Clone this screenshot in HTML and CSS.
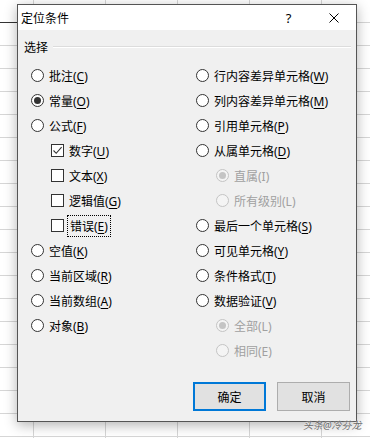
FILE: index.html
```html
<!DOCTYPE html>
<html lang="zh-CN">
<head>
    <meta charset="UTF-8">
    <title>定位条件</title>
    <link rel="stylesheet" href="styles.css">
</head>
<body>

<div class="sheet-mark"></div>

<div class="dialog">
    <div class="titlebar">
        <span class="title">定位条件</span>
        <span class="cap-btn">?</span>
        <span class="cap-btn">
            <svg width="10" height="10" viewBox="0 0 10 10"><path d="M0.5 0.5L9.5 9.5M9.5 0.5L0.5 9.5" stroke="#000" stroke-width="1" fill="none"/></svg>
        </span>
    </div>

    <div class="content">
        <div class="group-head">
            <span>选择</span>
            <i class="rule"></i>
        </div>

        <div class="options">
            <!-- left column -->
            <div class="col">
                <div class="opt"><span class="radio"></span><span>批注(<u>C</u>)</span></div>
                <div class="opt"><span class="radio checked"></span><span>常量(<u>O</u>)</span></div>
                <div class="opt"><span class="radio"></span><span>公式(<u>F</u>)</span></div>
                <div class="opt sub"><span class="check">
                    <svg width="11" height="11" viewBox="0 0 11 11"><path d="M1.5 5.5L4.2 8.3L9.6 2.2" stroke="#333" stroke-width="1.1" fill="none"/></svg>
                </span><span>数字(<u>U</u>)</span></div>
                <div class="opt sub"><span class="check"></span><span>文本(<u>X</u>)</span></div>
                <div class="opt sub"><span class="check"></span><span>逻辑值(<u>G</u>)</span></div>
                <div class="opt sub"><span class="check"></span><span class="focus">错误(<u>E</u>)</span></div>
                <div class="opt"><span class="radio"></span><span>空值(<u>K</u>)</span></div>
                <div class="opt"><span class="radio"></span><span>当前区域(<u>R</u>)</span></div>
                <div class="opt"><span class="radio"></span><span>当前数组(<u>A</u>)</span></div>
                <div class="opt"><span class="radio"></span><span>对象(<u>B</u>)</span></div>
            </div>

            <!-- right column -->
            <div class="col">
                <div class="opt"><span class="radio"></span><span>行内容差异单元格(<u>W</u>)</span></div>
                <div class="opt"><span class="radio"></span><span>列内容差异单元格(<u>M</u>)</span></div>
                <div class="opt"><span class="radio"></span><span>引用单元格(<u>P</u>)</span></div>
                <div class="opt"><span class="radio"></span><span>从属单元格(<u>D</u>)</span></div>
                <div class="opt sub disabled"><span class="radio checked"></span><span>直属(I)</span></div>
                <div class="opt sub disabled"><span class="radio"></span><span>所有级别(L)</span></div>
                <div class="opt"><span class="radio"></span><span>最后一个单元格(<u>S</u>)</span></div>
                <div class="opt"><span class="radio"></span><span>可见单元格(<u>Y</u>)</span></div>
                <div class="opt"><span class="radio"></span><span>条件格式(<u>T</u>)</span></div>
                <div class="opt"><span class="radio"></span><span>数据验证(<u>V</u>)</span></div>
                <div class="opt sub disabled"><span class="radio checked"></span><span>全部(L)</span></div>
                <div class="opt sub disabled"><span class="radio"></span><span>相同(E)</span></div>
            </div>
        </div>

        <div class="footer">
            <button type="button" class="btn default">确定</button>
            <button type="button" class="btn">取消</button>
        </div>
    </div>
</div>

<div class="watermark">头条@冷芬龙</div>

</body>
</html>
```

FILE: styles.css
```css
body {
    margin: 0;
    width: 370px;
    height: 438px;
    overflow: hidden;
    font-family: "Noto Sans", "Noto Sans CJK SC", sans-serif;
    font-size: 12px;
    color: #000;
    background-color: #fff;
    background-image:
        linear-gradient(to right, #d6d6d6 1px, transparent 1px),
        linear-gradient(to bottom, #d6d6d6 1px, transparent 1px);
    background-size: 72px 23px;
    background-position: 33px 22px;
}
.sheet-mark {
    position: absolute;
    left: 0;
    top: 22px;
    width: 17px;
    height: 1px;
    background: #333;
}
.dialog {
    position: absolute;
    left: 17px;
    top: 4px;
    width: 338px;
    height: 416px;
    border: 1px solid #555;
    background: #f0f0f0;
    box-shadow: 0 3px 12px rgba(0, 0, 0, 0.3);
    display: flex;
    flex-direction: column;
}
.titlebar {
    height: 25px;
    background: #fff;
    display: flex;
    align-items: center;
}
.title {
    flex: 1;
    padding-left: 3px;
}
.cap-btn {
    width: 45px;
    height: 25px;
    display: flex;
    align-items: center;
    justify-content: center;
    font-size: 13px;
}
.content {
    flex: 1;
    display: flex;
    flex-direction: column;
}
.group-head {
    margin-top: 9px;
    height: 16px;
    display: flex;
    align-items: center;
    padding: 0 5px 0 6px;
}
.group-head .rule {
    flex: 1;
    height: 1px;
    margin-left: 5px;
    background: #dcdcdc;
    border-bottom: 1px solid #fff;
}
.options {
    margin-top: 8px;
    display: grid;
    grid-template-columns: 165px 1fr;
    padding-left: 13px;
}
.opt {
    height: 25px;
    display: flex;
    align-items: center;
    gap: 5px;
    white-space: nowrap;
}
.opt u {
    text-decoration-thickness: 1px;
    text-underline-offset: 2px;
}
.opt.sub {
    padding-left: 20px;
}
.col .opt.sub .check {
    margin-left: 0;
}
.radio {
    width: 11px;
    height: 11px;
    border: 1px solid #333;
    border-radius: 50%;
    background: #fff;
    display: flex;
    align-items: center;
    justify-content: center;
    flex: none;
}
.radio.checked::after {
    content: "";
    width: 7px;
    height: 7px;
    border-radius: 50%;
    background: #333;
}
.check {
    width: 11px;
    height: 11px;
    border: 1px solid #333;
    background: #fff;
    display: flex;
    align-items: center;
    justify-content: center;
    flex: none;
}
.check svg {
    display: block;
}
.focus {
    outline: 1px dotted #000;
    outline-offset: 1px;
    padding: 0 1px;
}
.disabled {
    color: #a0a0a0;
}
.disabled .radio {
    border-color: #c4c4c4;
    background: #f4f4f4;
}
.disabled .radio.checked::after {
    background: #c4c4c4;
}
.footer {
    margin-top: auto;
    display: flex;
    justify-content: flex-end;
    gap: 11px;
    padding: 0 6px 10px 0;
}
.btn {
    width: 73px;
    height: 29px;
    border: 1px solid #adadad;
    background: #e1e1e1;
    font-family: "Noto Sans", "Noto Sans CJK SC", sans-serif;
    font-size: 12px;
    color: #000;
    padding: 0;
}
.btn.default {
    border: 2px solid #0078d7;
}
.watermark {
    position: absolute;
    left: 303px;
    top: 417px;
    font-size: 10px;
    color: #6a6a6a;
    font-style: italic;
    text-shadow: 0 0 2px #fff;
}
```
